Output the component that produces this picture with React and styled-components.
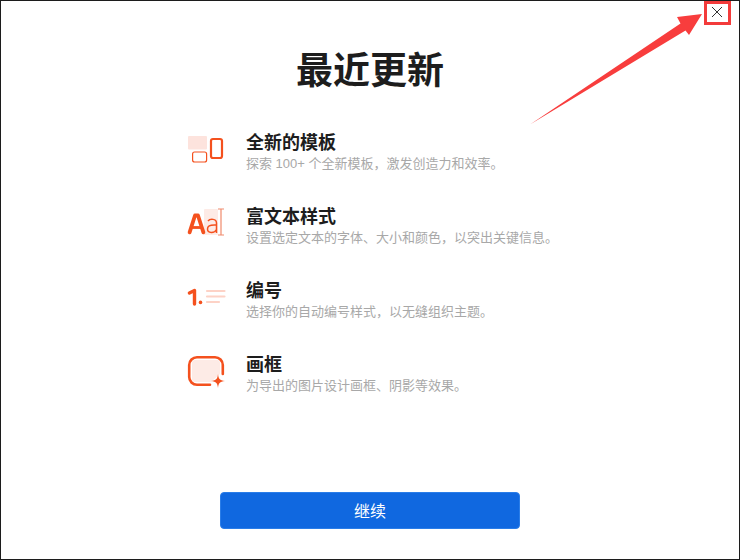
import React from "react";
import styled, { createGlobalStyle } from "styled-components";

const Global = createGlobalStyle`
  html, body { margin: 0; padding: 0; background: #fff; }
  * { box-sizing: border-box; }
`;

const FONT = `"Liberation Sans", "Noto Sans CJK SC", sans-serif`;

const Dialog = styled.div`
  position: relative;
  width: 740px;
  height: 560px;
  border: 1px solid #1c1c1c;
  background: #fff;
  font-family: ${FONT};
  display: flex;
  flex-direction: column;
  align-items: center;
  overflow: hidden;
`;

const Title = styled.h1`
  margin: 47px 0 0;
  font-size: 37px;
  line-height: 48px;
  font-weight: 700;
  color: #1d1d1d;
`;

const List = styled.div`
  margin-top: 30px;
  width: 366px;
  display: flex;
  flex-direction: column;
  gap: 20px;
  flex: 1;
`;

const Row = styled.div`
  display: flex;
  align-items: center;
  gap: 19px;
  height: 54px;
`;

const IconBox = styled.div`
  width: 40px;
  height: 40px;
  flex: none;
  svg { display: block; }
`;

const Body = styled.div`
  display: flex;
  flex-direction: column;
  padding-bottom: 3px;
`;

const RowTitle = styled.div`
  font-size: 18px;
  line-height: 24px;
  font-weight: 700;
  color: #1d1d1d;
`;

const RowText = styled.div`
  font-size: 13px;
  line-height: 18px;
  color: #a8a8a8;
  white-space: nowrap;
`;

const Continue = styled.button`
  width: 300px;
  height: 37px;
  margin-bottom: 30px;
  border: 1px solid #2a7de8;
  border-radius: 4px;
  background: #1068e0;
  color: #fff;
  font-family: ${FONT};
  font-size: 16px;
  padding: 0 0 2px;
`;

const Close = styled.button`
  position: absolute;
  top: 1px;
  right: 12px;
  width: 20px;
  height: 20px;
  padding: 0;
  border: none;
  background: none;
  display: flex;
  align-items: center;
  justify-content: center;
`;

const Annotation = styled.svg`
  position: absolute;
  left: -1px;
  top: -1px;
  pointer-events: none;
`;

const O = "#f4511e";
const P = "#fde3dd";
const Q = "#fdebe6";

const Templates = () => (
  <svg width="40" height="40" viewBox="0 0 40 40">
    <rect x="1" y="3" width="19" height="13.5" rx="1" fill={P} />
    <rect x="24" y="6" width="11" height="19" rx="2" fill="none" stroke={O} strokeWidth="2.2" />
    <rect x="5.6" y="19" width="14" height="10" rx="2" fill="none" stroke={O} strokeWidth="1.2" />
  </svg>
);
const TextStyle = () => (
  <svg width="40" height="40" viewBox="0 0 40 40">
    <rect x="17" y="2" width="14" height="26" rx="1" fill={Q} />
    <path d="M2.6 25.4 L8 8.5 H11 L16.4 25.4" fill="none" stroke={O} strokeWidth="3.8" strokeLinejoin="round" strokeLinecap="round" />
    <path d="M5 20.5 H14" stroke={O} strokeWidth="2.8" />
    <path d="M21 14 C23 11.5 29.5 11.5 29.5 16 V26 M29.5 18 C22 17.5 20.5 19.5 20.5 22 C20.5 26.5 27.5 26.5 29.5 22.5" fill="none" stroke={O} strokeWidth="1.5" />
    <path d="M34 2 V28 M31 2 H37 M31 28 H37" stroke="#f08a6c" strokeWidth="1.2" />
  </svg>
);
const Numbered = () => (
  <svg width="40" height="40" viewBox="0 0 40 40">
    <path d="M2.4 12 L7.5 9.5 V23" fill="none" stroke={O} strokeWidth="3.4" strokeLinejoin="round" strokeLinecap="round" />
    <circle cx="13.5" cy="21.4" r="1.8" fill={O} />
    <path d="M20 10 H37.5 M20 15.5 H37.5 M20 21 H32" stroke="#fdd2c6" strokeWidth="2.2" strokeLinecap="round" />
  </svg>
);
const Frame = () => (
  <svg width="40" height="40" viewBox="0 0 40 40">
    <path d="M8 5 H30 A3 3 0 0 1 33 8 V19 L24 27 H8 A3 3 0 0 1 5 24 V8 A3 3 0 0 1 8 5 Z" fill={Q} />
    <path d="M23 29.8 H10 A7.8 7.8 0 0 1 2.2 22 V10 A7.8 7.8 0 0 1 10 2.2 H28 A7.8 7.8 0 0 1 35.8 10 V19" fill="none" stroke={O} strokeWidth="2.6" strokeLinecap="round" />
    <path d="M31 19 C31.6 24 32.5 25.2 38 26 C32.5 26.8 31.6 28 31 33 C30.4 28 29.5 26.8 24 26 C29.5 25.2 30.4 24 31 19 Z" fill={O} />
  </svg>
);

const items = [
  { Icon: Templates, title: "全新的模板", text: "探索 100+ 个全新模板，激发创造力和效率。" },
  { Icon: TextStyle, title: "富文本样式", text: "设置选定文本的字体、大小和颜色，以突出关键信息。" },
  { Icon: Numbered, title: "编号", text: "选择你的自动编号样式，以无缝组织主题。" },
  { Icon: Frame, title: "画框", text: "为导出的图片设计画框、阴影等效果。" },
];

export default function App() {
  return (
    <>
      <Global />
      <Dialog>
        <Title>最近更新</Title>
        <List>
          {items.map(({ Icon, title, text }) => (
            <Row key={title}>
              <IconBox><Icon /></IconBox>
              <Body>
                <RowTitle>{title}</RowTitle>
                <RowText>{text}</RowText>
              </Body>
            </Row>
          ))}
        </List>
        <Continue>继续</Continue>
        <Close aria-label="关闭">
          <svg width="12" height="12" viewBox="0 0 12 12">
            <path d="M1 1 L11 11 M11 1 L1 11" stroke="#333" strokeWidth="1" />
          </svg>
        </Close>
        <Annotation width="740" height="560" viewBox="0 0 740 560">
          <rect x="705.5" y="2.5" width="24" height="21" fill="none" stroke="#f33b3b" strokeWidth="3" />
          <path d="M530 124.5 L680.5 23.5 L677 17 L702 14 L689 35 L685.5 30.5 Z" fill="#f83d3d" />
        </Annotation>
      </Dialog>
    </>
  );
}
